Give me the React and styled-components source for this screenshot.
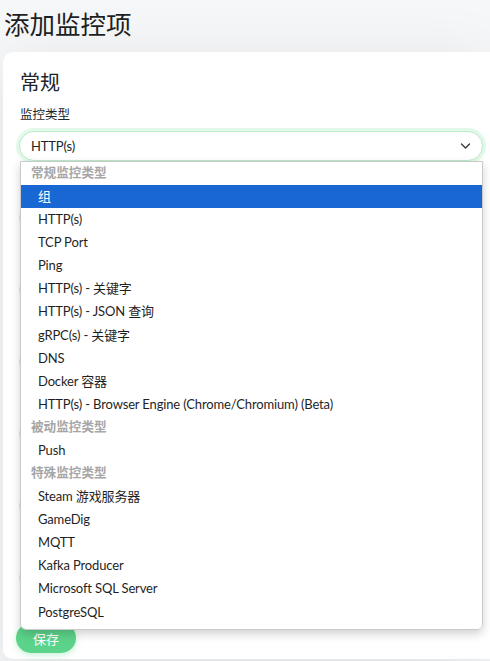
import React from 'react';
import styled, { createGlobalStyle } from 'styled-components';

const GlobalStyle = createGlobalStyle`
	html, body {
		margin: 0;
		padding: 0;
		background: #f6f7f8;
		font-family: Lato, "Noto Sans CJK SC", sans-serif;
		color: #212529;
		overflow: hidden;
	}
	* {
		box-sizing: border-box;
	}
`;

const Page = styled.div`
	padding: 0 0 0 3px;
	height: 661px;
	overflow: hidden;
`;

const PageTitle = styled.h1`
	margin: 8px 0 12px 1px;
	font-size: 25.5px;
	line-height: 32px;
	font-weight: 400;
	color: #1c1f23;
`;

const Card = styled.div`
	background: #fff;
	border-radius: 10px 0 0 10px;
	box-shadow: 0 15px 70px rgba(0, 0, 0, 0.1);
	padding: 18px 7px 6px 16px;
`;

const SectionTitle = styled.h2`
	margin: 0 0 11px 1px;
	font-size: 20px;
	line-height: 24px;
	font-weight: 400;
`;

const Label = styled.div`
	font-size: 12.5px;
	line-height: 19.5px;
	margin: 0 0 6.5px 1px;
	color: #212529;
`;

const SelectWrap = styled.div`
	position: relative;
`;

const SelectBox = styled.div`
	height: 30px;
	display: flex;
	align-items: center;
	justify-content: space-between;
	padding: 0 11px 0 11px;
	border: 1px solid #b9ecc9;
	border-radius: 15px;
	box-shadow: 0 0 0 3px rgba(92, 221, 139, 0.18);
	font-size: 13px;
	letter-spacing: -0.15px;
	background: #fff;
`;

const Dropdown = styled.div`
	position: absolute;
	top: 30px;
	left: 1px;
	right: 0;
	height: 469px;
	padding-top: 0;
	background: #fff;
	border: 1px solid #c9c9c9;
	border-radius: 0 0 6px 6px;
	box-shadow: 0 4px 10px rgba(0, 0, 0, 0.18);
	overflow-y: scroll;
	z-index: 5;

	&::-webkit-scrollbar {
		width: 4px;
	}
	&::-webkit-scrollbar-track {
		background: #f2f2f2;
	}
	&::-webkit-scrollbar-thumb {
		background: #bdbdbd;
	}
`;

const GroupLabel = styled.div`
	height: 23px;
	line-height: 21px;
	padding-left: 10px;
	font-size: 12.6px;
	font-weight: 600;
	color: #a6a6a6;
	white-space: nowrap;
`;

const Option = styled.div`
	height: 23.1px;
	line-height: 22px;
	padding-left: 17px;
	font-size: 13px;
	letter-spacing: -0.15px;
	white-space: nowrap;
	color: ${p => (p.$active ? '#fff' : '#1f1f1f')};
	background: ${p => (p.$active ? '#1967d2' : 'transparent')};
`;

const Fields = styled.div`
	display: flex;
	flex-direction: column;
	gap: 16px;
	margin-top: 16px;
`;

const Field = styled.div`
	height: 56px;
	display: flex;
	flex-direction: column;
	justify-content: flex-end;
`;

const Input = styled.div`
	height: 30px;
	border: 1px solid #dee2e6;
	border-radius: 15px;
`;

const SaveButton = styled.button`
	margin: 30px 0 0 -3px;
	width: 60px;
	height: 30px;
	border: none;
	border-radius: 15px;
	background: #5cd38a;
	color: #fff;
	font-family: inherit;
	font-size: 13px;
	box-shadow: 0 2px 6px rgba(92, 211, 138, 0.35);
`;

const groups = [
	{
		label: '常规监控类型',
		options: [
			'组',
			'HTTP(s)',
			'TCP Port',
			'Ping',
			'HTTP(s) - 关键字',
			'HTTP(s) - JSON 查询',
			'gRPC(s) - 关键字',
			'DNS',
			'Docker 容器',
			'HTTP(s) - Browser Engine (Chrome/Chromium) (Beta)',
		],
	},
	{
		label: '被动监控类型',
		options: ['Push'],
	},
	{
		label: '特殊监控类型',
		options: [
			'Steam 游戏服务器',
			'GameDig',
			'MQTT',
			'Kafka Producer',
			'Microsoft SQL Server',
			'PostgreSQL',
			'MySQL/MariaDB',
			'MongoDB',
			'Radius',
			'Redis',
		],
	},
];

// the rest of the form sits under the open list
const hiddenFields = ['name', 'url', 'interval', 'retries', 'retry', 'timeout'];

const Chevron = () => (
	<svg width="11" height="8" viewBox="0 0 16 12">
		<path d="m2 3 6 6 6-6" fill="none" stroke="#343a40" strokeWidth="2" strokeLinecap="round" strokeLinejoin="round" />
	</svg>
);

const App = () => (
	<>
		<GlobalStyle />
		<Page>
			<PageTitle>添加监控项</PageTitle>
			<Card>
				<SectionTitle>常规</SectionTitle>
				<Label>监控类型</Label>
				<SelectWrap>
					<SelectBox>
						<span>HTTP(s)</span>
						<Chevron />
					</SelectBox>
					<Dropdown>
						{groups.map(group => (
							<React.Fragment key={group.label}>
								<GroupLabel>{group.label}</GroupLabel>
								{group.options.map(opt => (
									<Option key={opt} $active={opt === '组'}>
										{opt}
									</Option>
								))}
							</React.Fragment>
						))}
					</Dropdown>
				</SelectWrap>
				<Fields>
					{hiddenFields.map(name => (
						<Field key={name}>
							<Input />
						</Field>
					))}
				</Fields>
				<SaveButton>保存</SaveButton>
			</Card>
		</Page>
	</>
);

export default App;
